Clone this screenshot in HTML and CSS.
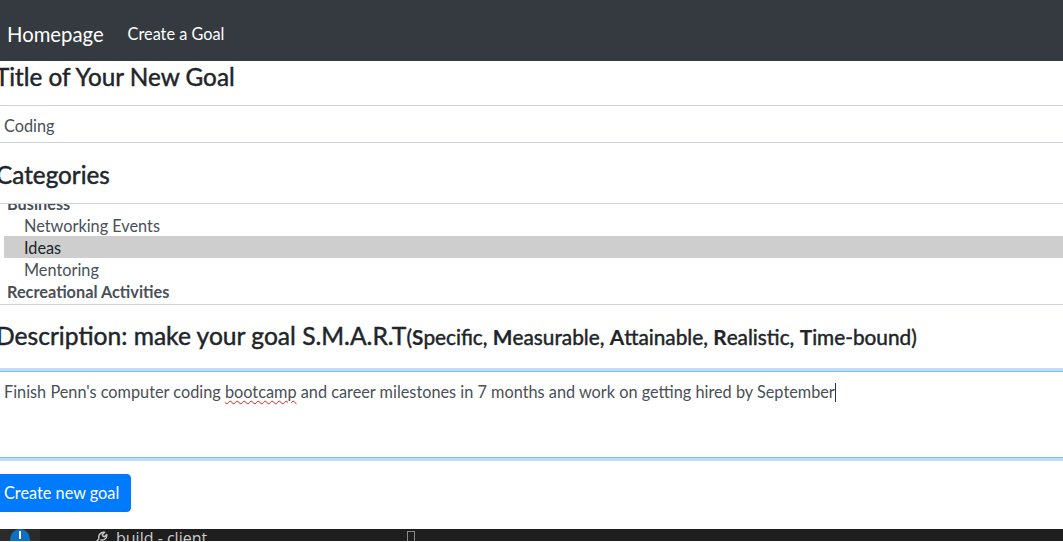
FILE: index.html
```html
<!DOCTYPE html>
<html lang="en">
<head>
<meta charset="utf-8">
<title>Create a Goal</title>
<link rel="stylesheet" href="styles.css">
</head>
<body>
<nav class="navbar">
  <a class="brand" href="#">Homepage</a>
  <a class="nav-link" href="#">Create a Goal</a>
</nav>

<main class="form">
  <h4 class="label title-label">Title of Your New Goal</h4>
  <div class="input">Coding</div>

  <h4 class="label cat-label">Categories</h4>
  <div class="select">
    <div class="select-inner">
      <div class="group">Business</div>
      <div class="option">Networking Events</div>
      <div class="option selected">Ideas</div>
      <div class="option">Mentoring</div>
      <div class="group">Recreational Activities</div>
    </div>
  </div>

  <h4 class="label desc-label">Description: make your goal S.M.A.R.T<span class="smart">(<b>S</b>pecific, <b>M</b>easurable, <b>A</b>ttainable, <b>R</b>ealistic, <b>T</b>ime-bound)</span></h4>
  <div class="textarea">Finish Penn's computer coding <span class="misspelled">bootcamp</span> and career milestones in 7 months and work on getting hired by September<span class="caret"></span></div>

  <button class="btn" type="button">Create new goal</button>
</main>

<footer class="taskbar">
  <div class="tb-left"><span class="tb-badge"></span></div>
  <div class="tb-item">
    <svg class="tb-wrench" width="17" height="17" viewBox="0 0 16 16"><path d="M1.5 14.5 L7.5 8.5 M7.5 8.5 C6.5 5 9 1.5 12.8 2.2 L10.6 4.4 L11.2 5.8 L12.6 6.4 L14.8 4.2 C15.4 8 12 10.2 8.8 9.2" fill="none" stroke="#c5c5c5" stroke-width="1.4" stroke-linejoin="round"/></svg>
    <span class="tb-text">build - client</span>
  </div>
  <span class="tb-box"></span>
</footer>
</body>
</html>
```
FILE: styles.css
```css
* { box-sizing: border-box; }
html, body { margin: 0; padding: 0; }
body {
  font-family: Lato, "Liberation Sans", sans-serif;
  font-size: 16.3px;
  color: #212529;
  background: #fff;
  overflow: hidden;
  width: 1063px;
  height: 542px;
}

.navbar {
  height: 61px;
  background: #343a40;
  display: flex;
  align-items: center;
  padding: 6px 0 0 7px;
}
.brand {
  color: #fff;
  text-decoration: none;
  font-size: 20.3px;
  margin-right: 24px;
}
.nav-link {
  color: #fff;
  text-decoration: none;
  font-size: 16.3px;
}

.form {
  margin: 0 -9px;
  display: flex;
  flex-direction: column;
  align-items: stretch;
}
.label {
  margin: 0;
  font-size: 24.3px;
  font-weight: 400;
  -webkit-text-stroke: 0.45px #212529;
  line-height: 29px;
  padding-left: 5px;
  color: #212529;
  white-space: nowrap;
}
.title-label { margin-top: 1px; margin-bottom: 14px; padding-left: 4px; }
.cat-label { margin-top: 17px; margin-bottom: 14px; padding-left: 5px; }
.desc-label {
  margin-top: 16px;
  margin-bottom: 21px;
  padding-left: 5px;
  font-size: 24.6px;
  height: 29px;
}

.smart { font-size: 20.8px; }
.smart b { font-weight: 700; -webkit-text-stroke: 0.2px #212529; }

.input {
  height: 38px;
  border: 1px solid #ced4da;
  padding: 8px 12px 4px;
  line-height: 24px;
  color: #495057;
}

.select {
  height: 102px;
  border: 1px solid #ced4da;
  padding-left: 12px;
  overflow: hidden;
  color: #495057;
}
.select-inner { margin-top: -12px; }
.group {
  height: 22px;
  line-height: 21px;
  padding-top: 1px;
  padding-left: 3px;
  font-weight: 700;
}
.option {
  height: 22px;
  line-height: 21px;
  padding-top: 1px;
  padding-left: 20px;
}
.option.selected { background: #cecece; color: #212529; }

.textarea {
  height: 87px;
  border: 1px solid #80bdff;
  box-shadow: 0 0 0 3px rgba(0, 123, 255, 0.25);
  padding: 8px 12px 4px;
  line-height: 24px;
  color: #495057;
}
.misspelled {
  text-decoration: underline wavy #e0201c;
  text-decoration-thickness: 1px;
  text-underline-offset: 2px;
}
.caret {
  display: inline-block;
  width: 1px;
  height: 19px;
  background: #333;
  vertical-align: -4px;
}

.btn {
  align-self: flex-start;
  margin-top: 16px;
  height: 38px;
  width: 140px;
  border: 1px solid #007bff;
  background: #007bff;
  color: #fff;
  border-radius: 4px;
  font-family: inherit;
  font-size: 16.3px;
  padding: 0 0 2px 12px;
  text-align: left;
}

.taskbar {
  margin-top: 17px;
  height: 12px;
  background: #1e1e1e;
  display: flex;
  align-items: flex-start;
  overflow: hidden;
  position: relative;
}
.tb-left {
  width: 40px;
  height: 12px;
  background: #2b2b2b;
  position: relative;
  overflow: hidden;
}
.tb-badge {
  position: absolute;
  left: 10px;
  top: 0;
  width: 20px;
  height: 20px;
  border-radius: 50%;
  background: #0e70c0;
}
.tb-badge::after {
  content: "";
  position: absolute;
  left: 9px;
  top: 2px;
  width: 2px;
  height: 8px;
  background: #fff;
}
.tb-item {
  margin-left: 51px;
  display: flex;
  align-items: flex-start;
  gap: 8px;
  padding-top: 1px;
}
.tb-wrench { flex: none; }
.tb-text {
  color: #cccccc;
  font-family: "Open Sans", sans-serif;
  font-size: 16px;
  line-height: 16px;
  margin-top: 0;
}
.tb-box {
  position: absolute;
  left: 407px;
  top: 2px;
  width: 8px;
  height: 14px;
  border: 1px solid #8a8a8a;
}
```
